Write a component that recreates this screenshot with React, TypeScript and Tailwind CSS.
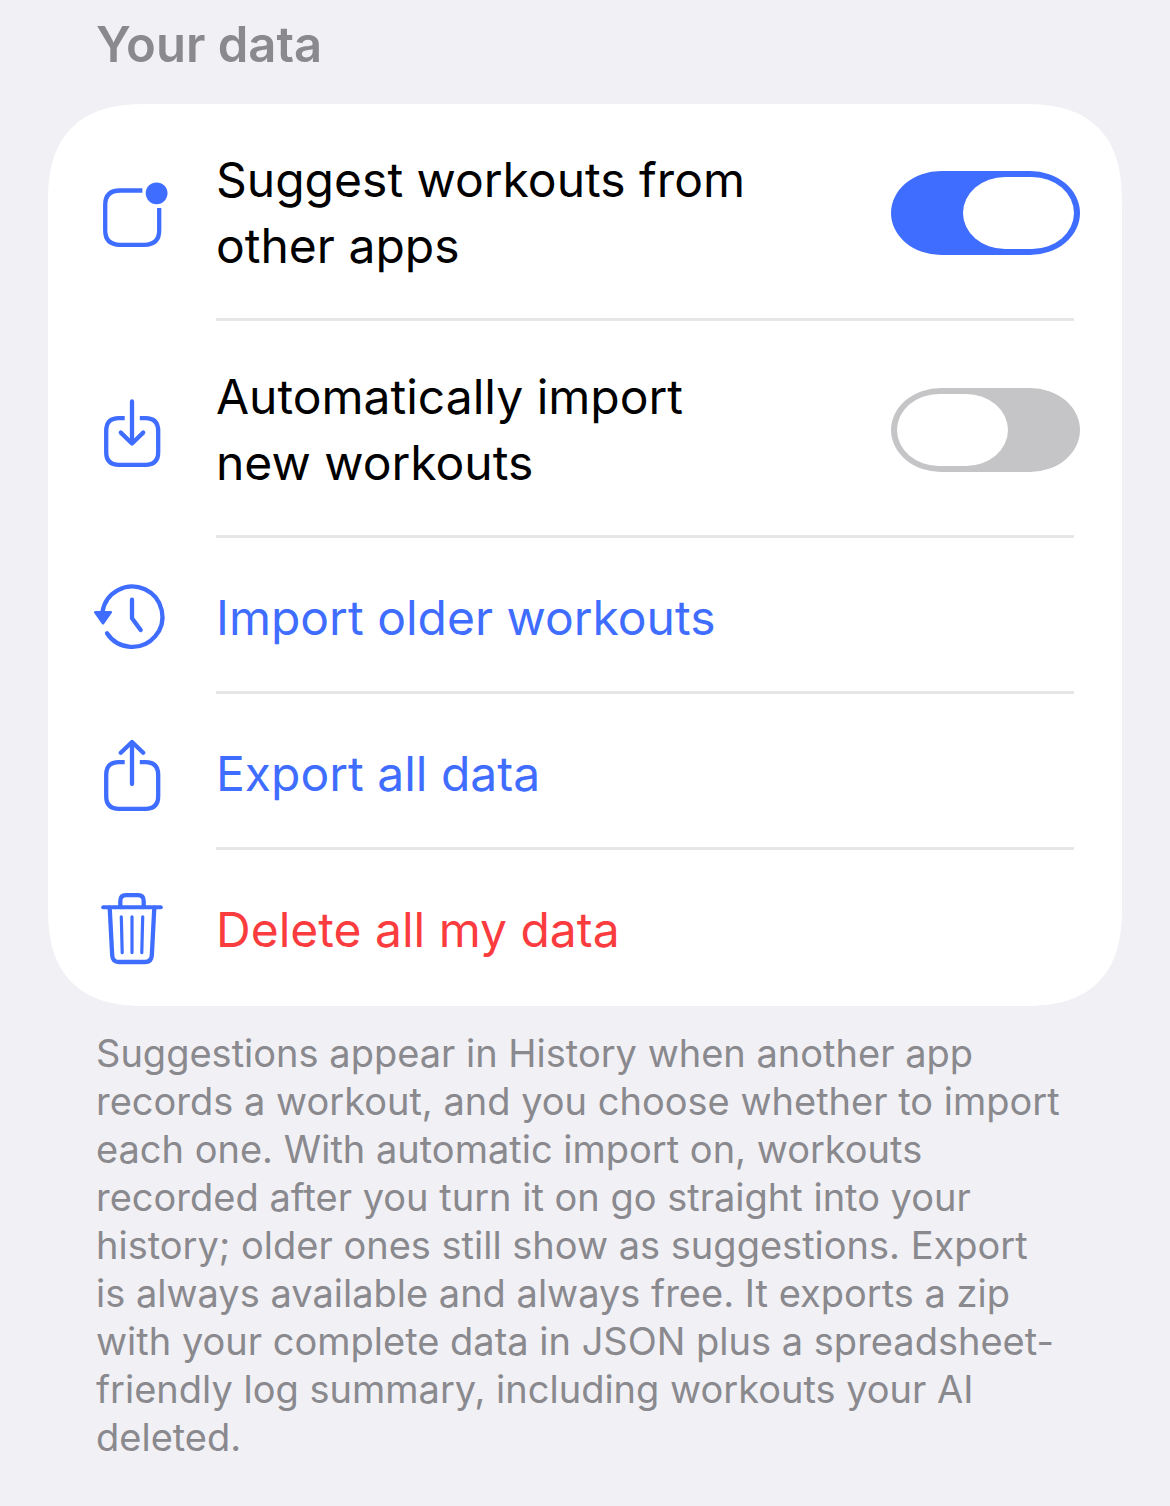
import type { ReactNode } from "react";

function Icon({ children }: { children: ReactNode }) {
  return (
    <svg
      viewBox="0 0 84 84"
      className="w-[84px] h-[84px]"
      fill="none"
      stroke="#3f6dff"
      strokeWidth="4.3"
      strokeLinecap="round"
      strokeLinejoin="round"
      aria-hidden="true"
    >
      {children}
    </svg>
  );
}

const boxWithGap = "M34.7 30.1 H29 Q16.2 30.1 16.2 43 V64 Q16.2 76.9 29 76.9 H55.4 Q68.2 76.9 68.2 64 V43 Q68.2 30.1 55.4 30.1 H49.8";

function BadgeIcon() {
  return (
    <Icon>
      <path
        strokeLinecap="butt"
        d="M52.4 19.5 H30 Q15.2 19.5 15.2 34 V59.3 Q15.2 73.8 30 73.8 H54.4 Q69.2 73.8 69.2 59.3 V37"
      />
      <circle cx="66.6" cy="22.3" r="10.9" fill="#3f6dff" stroke="none" />
    </Icon>
  );
}

function ImportIcon() {
  return (
    <Icon>
      <path strokeLinecap="butt" d={boxWithGap} />
      <path d="M42 13.5 V55.3 M30.8 44.6 L42 55.5 L53.2 44.6" />
    </Icon>
  );
}

function HistoryIcon() {
  return (
    <Icon>
      <path d="M12.4 36 A30.2 30.2 0 1 1 17 57.3" />
      <path d="M42 23.7 V42.2 L50.7 54" />
      <path d="M5.3 36.3 H20.7 L13 47.2 Z" fill="#3f6dff" strokeWidth="2.6" />
    </Icon>
  );
}

function ExportIcon() {
  return (
    <Icon>
      <path strokeLinecap="butt" d={boxWithGap} />
      <path d="M42 10.2 V52 M30.8 20.8 L42 10 L53.2 20.8" />
    </Icon>
  );
}

function TrashIcon() {
  return (
    <Icon>
      <path d="M13.2 19.3 H70.8" strokeWidth="4" />
      <path d="M30.3 19 V13 Q30.3 7.2 36 7.2 H48 Q53.7 7.2 53.7 13 V19" />
      <path d="M19.7 20 L22.2 67.5 Q22.6 74 29 74 H55 Q61.4 74 61.8 67.5 L64.3 20" />
      <path d="M31.3 28.8 L32.2 64.6 M42 28.8 V64.6 M52.7 28.8 L51.8 64.6" strokeWidth="3.2" />
    </Icon>
  );
}

function Divider() {
  return <div className="ml-[168px] mr-12 h-[3px] bg-[#e6e6e7]" />;
}

function ToggleRow({ id, icon, label, on }: { id: string; icon: ReactNode; label: string; on?: boolean }) {
  return (
    <div className="flex items-center pt-[43px] pb-[39px] pr-[42px]">
      <div className="w-[168px] shrink-0 flex justify-center">{icon}</div>
      <div className="flex-1 flex items-center justify-between gap-12">
        <label htmlFor={id} className="max-w-[564px]">{label}</label>
        <input
          id={id}
          type="checkbox"
          role="switch"
          defaultChecked={on}
          className="appearance-none shrink-0 flex w-[189px] h-[84px] p-[6px] rounded-[50px/42px] bg-[#c5c5c7] checked:bg-[#3f6dff] checked:justify-end before:w-[111px] before:h-[72px] before:rounded-[42px/36px] before:bg-white"
        />
      </div>
    </div>
  );
}

function ActionRow({ icon, label, danger }: { icon: ReactNode; label: string; danger?: boolean }) {
  return (
    <button className="flex items-center w-full h-[153px] pt-[7px] text-left">
      <span className="w-[168px] shrink-0 flex justify-center">{icon}</span>
      <span className={danger ? "text-[#fa3c3f]" : "text-[#3f6dff]"}>{label}</span>
    </button>
  );
}

export default function App() {
  return (
    <main className="min-h-screen bg-[#f1f0f5] px-12 pt-3 pb-11 font-['Inter',sans-serif]">
      <h2 className="px-12 text-[49px] leading-[66px] font-semibold text-[#89898e]">Your data</h2>

      <section className="mt-[26px] pb-[3px] bg-white rounded-[100px] [corner-shape:superellipse(1.35)] text-[48px] leading-[66px] text-black">
        <ToggleRow id="suggest" icon={<BadgeIcon />} label="Suggest workouts from other apps" on />
        <Divider />
        <ToggleRow id="auto-import" icon={<ImportIcon />} label="Automatically import new workouts" />
        <Divider />
        <ActionRow icon={<HistoryIcon />} label="Import older workouts" />
        <Divider />
        <ActionRow icon={<ExportIcon />} label="Export all data" />
        <Divider />
        <ActionRow icon={<TrashIcon />} label="Delete all my data" danger />
      </section>

      <p className="mt-[23px] pl-12 pr-[58px] text-[38px] leading-[48px] text-[#89898e]">
        Suggestions appear in History when another app records a workout, and you choose whether to import each one.
        With automatic import on, workouts recorded after you turn it on go straight into your history; older ones
        still show as suggestions. Export is always available and always free. It exports a zip with your complete
        data in JSON plus a spreadsheet-friendly log summary, including workouts your AI deleted.
      </p>
    </main>
  );
}
